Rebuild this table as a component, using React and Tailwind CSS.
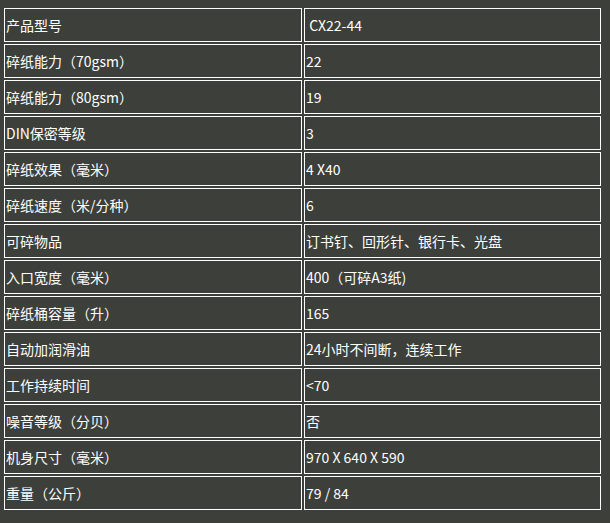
import React from 'react'

const specs = [
  ['产品型号', '\u00a0CX22-44'],
  ['碎纸能力（70gsm）', '22'],
  ['碎纸能力（80gsm）', '19'],
  ['DIN保密等级', '3'],
  ['碎纸效果（毫米）', '4 X40'],
  ['碎纸速度（米/分种）', '6'],
  ['可碎物品', '订书钉、回形针、银行卡、光盘'],
  ['入口宽度（毫米）', '400（可碎A3纸)'],
  ['碎纸桶容量（升）', '165'],
  ['自动加润滑油', '24小时不间断，连续工作'],
  ['工作持续时间', '<70'],
  ['噪音等级（分贝）', '否'],
  ['机身尺寸（毫米）', '970 X 640 X 590'],
  ['重量（公斤）', '79 / 84'],
]

const App = () => {
  return (
    <div
      className="min-h-screen w-[610px] bg-[#3d3f3a] pl-[2px] pt-[6px] text-white"
      style={{ fontFamily: '"Noto Sans CJK SC", "Noto Sans", sans-serif' }}
    >
      <table className="w-[601px] table-fixed border-separate border-spacing-[2px] text-[14px]">
        <colgroup>
          <col className="w-[298px]" />
          <col className="w-[297px]" />
        </colgroup>
        <tbody>
          {specs.map(([label, value]) => (
            <tr key={label}>
              <td className="h-[34px] border border-white px-[1px] align-middle leading-none whitespace-nowrap">
                {label}
              </td>
              <td className="h-[34px] border border-white px-[1px] align-middle leading-none whitespace-nowrap">
                {value}
              </td>
            </tr>
          ))}
        </tbody>
      </table>
    </div>
  )
}

export default App
